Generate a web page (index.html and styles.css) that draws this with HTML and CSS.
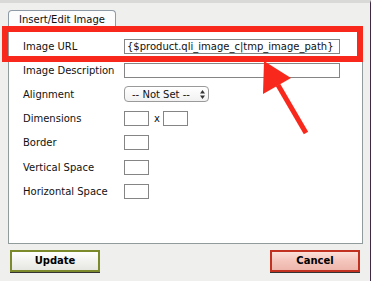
FILE: index.html
```html
<!DOCTYPE html>
<html>
<head>
<meta charset="utf-8">
<link rel="stylesheet" href="styles.css">
</head>
<body>
<div class="dialog">
  <div class="tabs"><div class="tab">Insert/Edit Image</div></div>
  <div class="panel">
    <div class="form">
      <div class="label">Image URL</div>
      <div class="field"><div class="input wide">{$product.qli_image_c|tmp_image_path}</div></div>
      <div class="label">Image Description</div>
      <div class="field"><div class="input wide"></div></div>
      <div class="label">Alignment</div>
      <div class="field"><div class="select"><span>-- Not Set --</span><svg class="arrows" width="5" height="9" viewBox="0 0 5 9"><polygon points="2.5,0 5,3.5 0,3.5" fill="#333"/><polygon points="0,5.5 5,5.5 2.5,9" fill="#333"/></svg></div></div>
      <div class="label">Dimensions</div>
      <div class="field"><div class="input small"></div><span class="times">x</span><div class="input small"></div></div>
      <div class="label">Border</div>
      <div class="field"><div class="input small"></div></div>
      <div class="label">Vertical Space</div>
      <div class="field"><div class="input small"></div></div>
      <div class="label">Horizontal Space</div>
      <div class="field"><div class="input small"></div></div>
    </div>
  </div>
  <div class="buttons">
    <div class="btn update">Update</div>
    <div class="btn cancel">Cancel</div>
  </div>
  <div class="highlight"></div>
  <svg class="arrow" width="371" height="281" viewBox="0 0 371 281">
    <line x1="306" y1="133" x2="278" y2="85" stroke="#f8291c" stroke-width="5"/>
    <polygon points="264,61 263,94 291,78" fill="#f8291c"/>
  </svg>
</div>
</body>
</html>
```

FILE: styles.css
```css
html, body {
  margin: 0;
  padding: 0;
}
body {
  width: 371px;
  height: 281px;
  background: #efefed;
  font-family: "DejaVu Sans", Verdana, sans-serif;
  font-size: 10px;
  color: #111;
  overflow: hidden;
}
.dialog {
  position: relative;
  width: 370px;
  height: 278px;
  border-top: 3px solid #d9d9d7;
  border-right: 1px solid #3e2a44;
}
.tabs {
  display: flex;
  padding: 7px 0 0 8px;
}
.tab {
  height: 17px;
  width: 108px;
  box-sizing: border-box;
  border: 1px solid #8e9aa6;
  border-bottom: none;
  border-radius: 4px 4px 0 0;
  background: #fcfcfc;
  text-align: center;
  line-height: 17px;
  font-size: 10px;
}
.panel {
  margin-left: 8px;
  width: 355px;
  height: 217px;
  box-sizing: border-box;
  border: 1px solid #919b9c;
  background: #fff;
  padding: 6px 0 0 14px;
}
.form {
  display: grid;
  grid-template-columns: 101px 1fr;
  grid-auto-rows: 24.2px;
  align-items: center;
}
.field {
  display: flex;
  align-items: center;
}
.input {
  box-sizing: border-box;
  height: 15px;
  border: 1px solid #858585;
  background: #fff;
  line-height: 13px;
  padding-left: 2px;
  white-space: nowrap;
  overflow: hidden;
}
.wide { width: 216px; }
.small { width: 25px; }
.times {
  margin: 0 3px 0 5px;
}
.select {
  box-sizing: border-box;
  width: 85px;
  height: 16px;
  border: 1px solid #9a9a9a;
  border-radius: 4px;
  background: linear-gradient(#ffffff, #f1f1f1);
  display: flex;
  align-items: center;
  justify-content: space-between;
  padding: 0 3px 0 7px;
}
.arrows {
  display: block;
}
.buttons {
  display: flex;
  justify-content: space-between;
  padding: 6px 10px 0 10px;
}
.btn {
  width: 90px;
  height: 22px;
  box-sizing: border-box;
  text-align: center;
  font-weight: bold;
  font-size: 10px;
  line-height: 18px;
  color: #000;
  border: 2px solid;
  box-shadow: 0 1px 0 #333;
}
.update {
  border-color: #7c8a2b;
  background: linear-gradient(#ffffff, #f2f2ef 50%, #e6e6e2);
}
.cancel {
  border-color: #c2311f;
  background: linear-gradient(#fbe0da, #f4c5bc 50%, #eeb6ac);
}
.highlight {
  position: absolute;
  left: 2px;
  top: 23px;
  width: 361px;
  height: 36px;
  box-sizing: border-box;
  border: 6px solid #f8291c;
}
.arrow {
  position: absolute;
  left: 0;
  top: -3px;
}
```
